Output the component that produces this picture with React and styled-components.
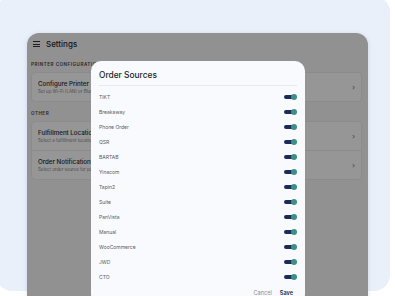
import React from 'react';
import styled, { createGlobalStyle } from 'styled-components';

const GlobalStyle = createGlobalStyle`
  html, body {
    margin: 0;
    padding: 0;
    background: #ffffff;
    font-family: 'Inter', 'Noto Sans', sans-serif;
  }
`;

const Stage = styled.div`
  position: relative;
  width: 395px;
  height: 296px;
  overflow: hidden;
  background: #ffffff;
  padding: 33px 0 0 27px;
  box-sizing: border-box;

  &::before {
    content: '';
    position: absolute;
    left: -4px;
    top: -4px;
    width: 394px;
    height: 295px;
    border-radius: 16px;
    background: #e9f0fa;
  }
`;

const Tablet = styled.div`
  position: relative;
  width: 341px;
  height: 320px;
  border-radius: 12px 12px 0 0;
  background: #f6f7f9;
  box-shadow: 0 1px 5px rgba(40, 60, 90, 0.14);
  overflow: hidden;
`;

const TopBar = styled.div`
  display: flex;
  align-items: center;
  gap: 6px;
  height: 22px;
  padding: 0 6px;
  font-size: 8px;
  font-weight: 500;
  color: #262626;
`;

const Burger = styled.div`
  display: flex;
  flex-direction: column;
  gap: 1.5px;
  width: 7px;

  span {
    height: 1px;
    background: #333;
  }
`;

const Content = styled.div`
  display: flex;
  flex-direction: column;
  padding: 7px 6px 0 4px;
`;

const SectionLabel = styled.div`
  font-size: 4.6px;
  font-weight: 600;
  letter-spacing: 0.5px;
  color: #444;
  margin: ${p => p.$top || 0}px 0 5px;
  white-space: nowrap;
`;

const Card = styled.div`
  background: #ffffff;
  border: 1px solid #ececec;
  border-radius: 4px;
  display: flex;
  flex-direction: column;
`;

const CardRow = styled.div`
  display: flex;
  align-items: center;
  justify-content: space-between;
  height: 28px;
  padding: 0 6px;
  border-top: ${p => (p.$divided ? '1px solid #ececec' : 'none')};
`;

const RowText = styled.div`
  display: flex;
  flex-direction: column;
  gap: 2.5px;
  width: 54px;
  overflow: hidden;
  white-space: nowrap;
`;

const RowTitle = styled.div`
  font-size: 6.2px;
  font-weight: 500;
  color: #2a2a2a;
`;

const RowSub = styled.div`
  font-size: 4.4px;
  color: #8a8a8a;
`;

const Chevron = styled.span`
  font-size: 7px;
  color: #666;
`;

const Overlay = styled.div`
  position: absolute;
  inset: 0;
  background: rgba(0, 0, 0, 0.41);
  padding: 28px 0 0 64px;
`;

const Modal = styled.div`
  width: 214px;
  background: #f8fafd;
  border-radius: 10px;
  padding: 0 8px;
  box-sizing: border-box;
`;

const ModalTitle = styled.div`
  font-size: 8.4px;
  font-weight: 500;
  color: #1d1d1d;
  padding: 9px 0 5px;
  border-bottom: 1px solid #e6e9ee;
`;

const SourceList = styled.div`
  display: flex;
  flex-direction: column;
  padding-top: 3px;
`;

const SourceRow = styled.div`
  display: flex;
  align-items: center;
  justify-content: space-between;
  height: 15px;
  font-size: 5px;
  color: #5a5a5a;
`;

const Toggle = styled.div`
  position: relative;
  width: 12px;
  height: 4px;
  border-radius: 2px;
  background: #1b2c5c;
  margin-right: 1px;

  &::after {
    content: '';
    position: absolute;
    right: -1px;
    top: -1px;
    width: 6px;
    height: 6px;
    border-radius: 50%;
    background: #3e8f84;
  }
`;

const Footer = styled.div`
  display: flex;
  justify-content: flex-end;
  gap: 8px;
  padding: 6px 4px 8px;
  font-size: 5.6px;
`;

const FooterButton = styled.span`
  color: ${p => (p.$primary ? '#1c2a4e' : '#8d8d8d')};
  font-weight: ${p => (p.$primary ? 600 : 400)};
`;

const sources = [
  'TIKT', 'Breakaway', 'Phone Order', 'QSR', 'BARTAB', 'Yinacom', 'Tapin2',
  'Suite', 'PanVista', 'Manual', 'WooCommerce', 'JWD', 'CTO',
];

const App = () => (
  <>
    <GlobalStyle />
    <Stage>
      <Tablet>
        <TopBar>
          <Burger><span /><span /><span /></Burger>
          Settings
        </TopBar>
        <Content>
          <SectionLabel>PRINTER CONFIGURATION</SectionLabel>
          <Card>
            <CardRow>
              <RowText>
                <RowTitle>Configure Printer</RowTitle>
                <RowSub>Set up Wi-Fi (LAN) or Bluetooth printer</RowSub>
              </RowText>
              <Chevron>›</Chevron>
            </CardRow>
          </Card>
          <SectionLabel $top={9}>OTHER</SectionLabel>
          <Card>
            <CardRow>
              <RowText>
                <RowTitle>Fulfillment Location</RowTitle>
                <RowSub>Select a fulfillment location for this device</RowSub>
              </RowText>
              <Chevron>›</Chevron>
            </CardRow>
            <CardRow $divided>
              <RowText>
                <RowTitle>Order Notifications</RowTitle>
                <RowSub>Select order source for push notifications</RowSub>
              </RowText>
              <Chevron>›</Chevron>
            </CardRow>
          </Card>
        </Content>
        <Overlay>
          <Modal>
            <ModalTitle>Order Sources</ModalTitle>
            <SourceList>
              {sources.map(s => (
                <SourceRow key={s}>
                  {s}
                  <Toggle />
                </SourceRow>
              ))}
            </SourceList>
            <Footer>
              <FooterButton>Cancel</FooterButton>
              <FooterButton $primary>Save</FooterButton>
            </Footer>
          </Modal>
        </Overlay>
      </Tablet>
    </Stage>
  </>
);

export default App;
